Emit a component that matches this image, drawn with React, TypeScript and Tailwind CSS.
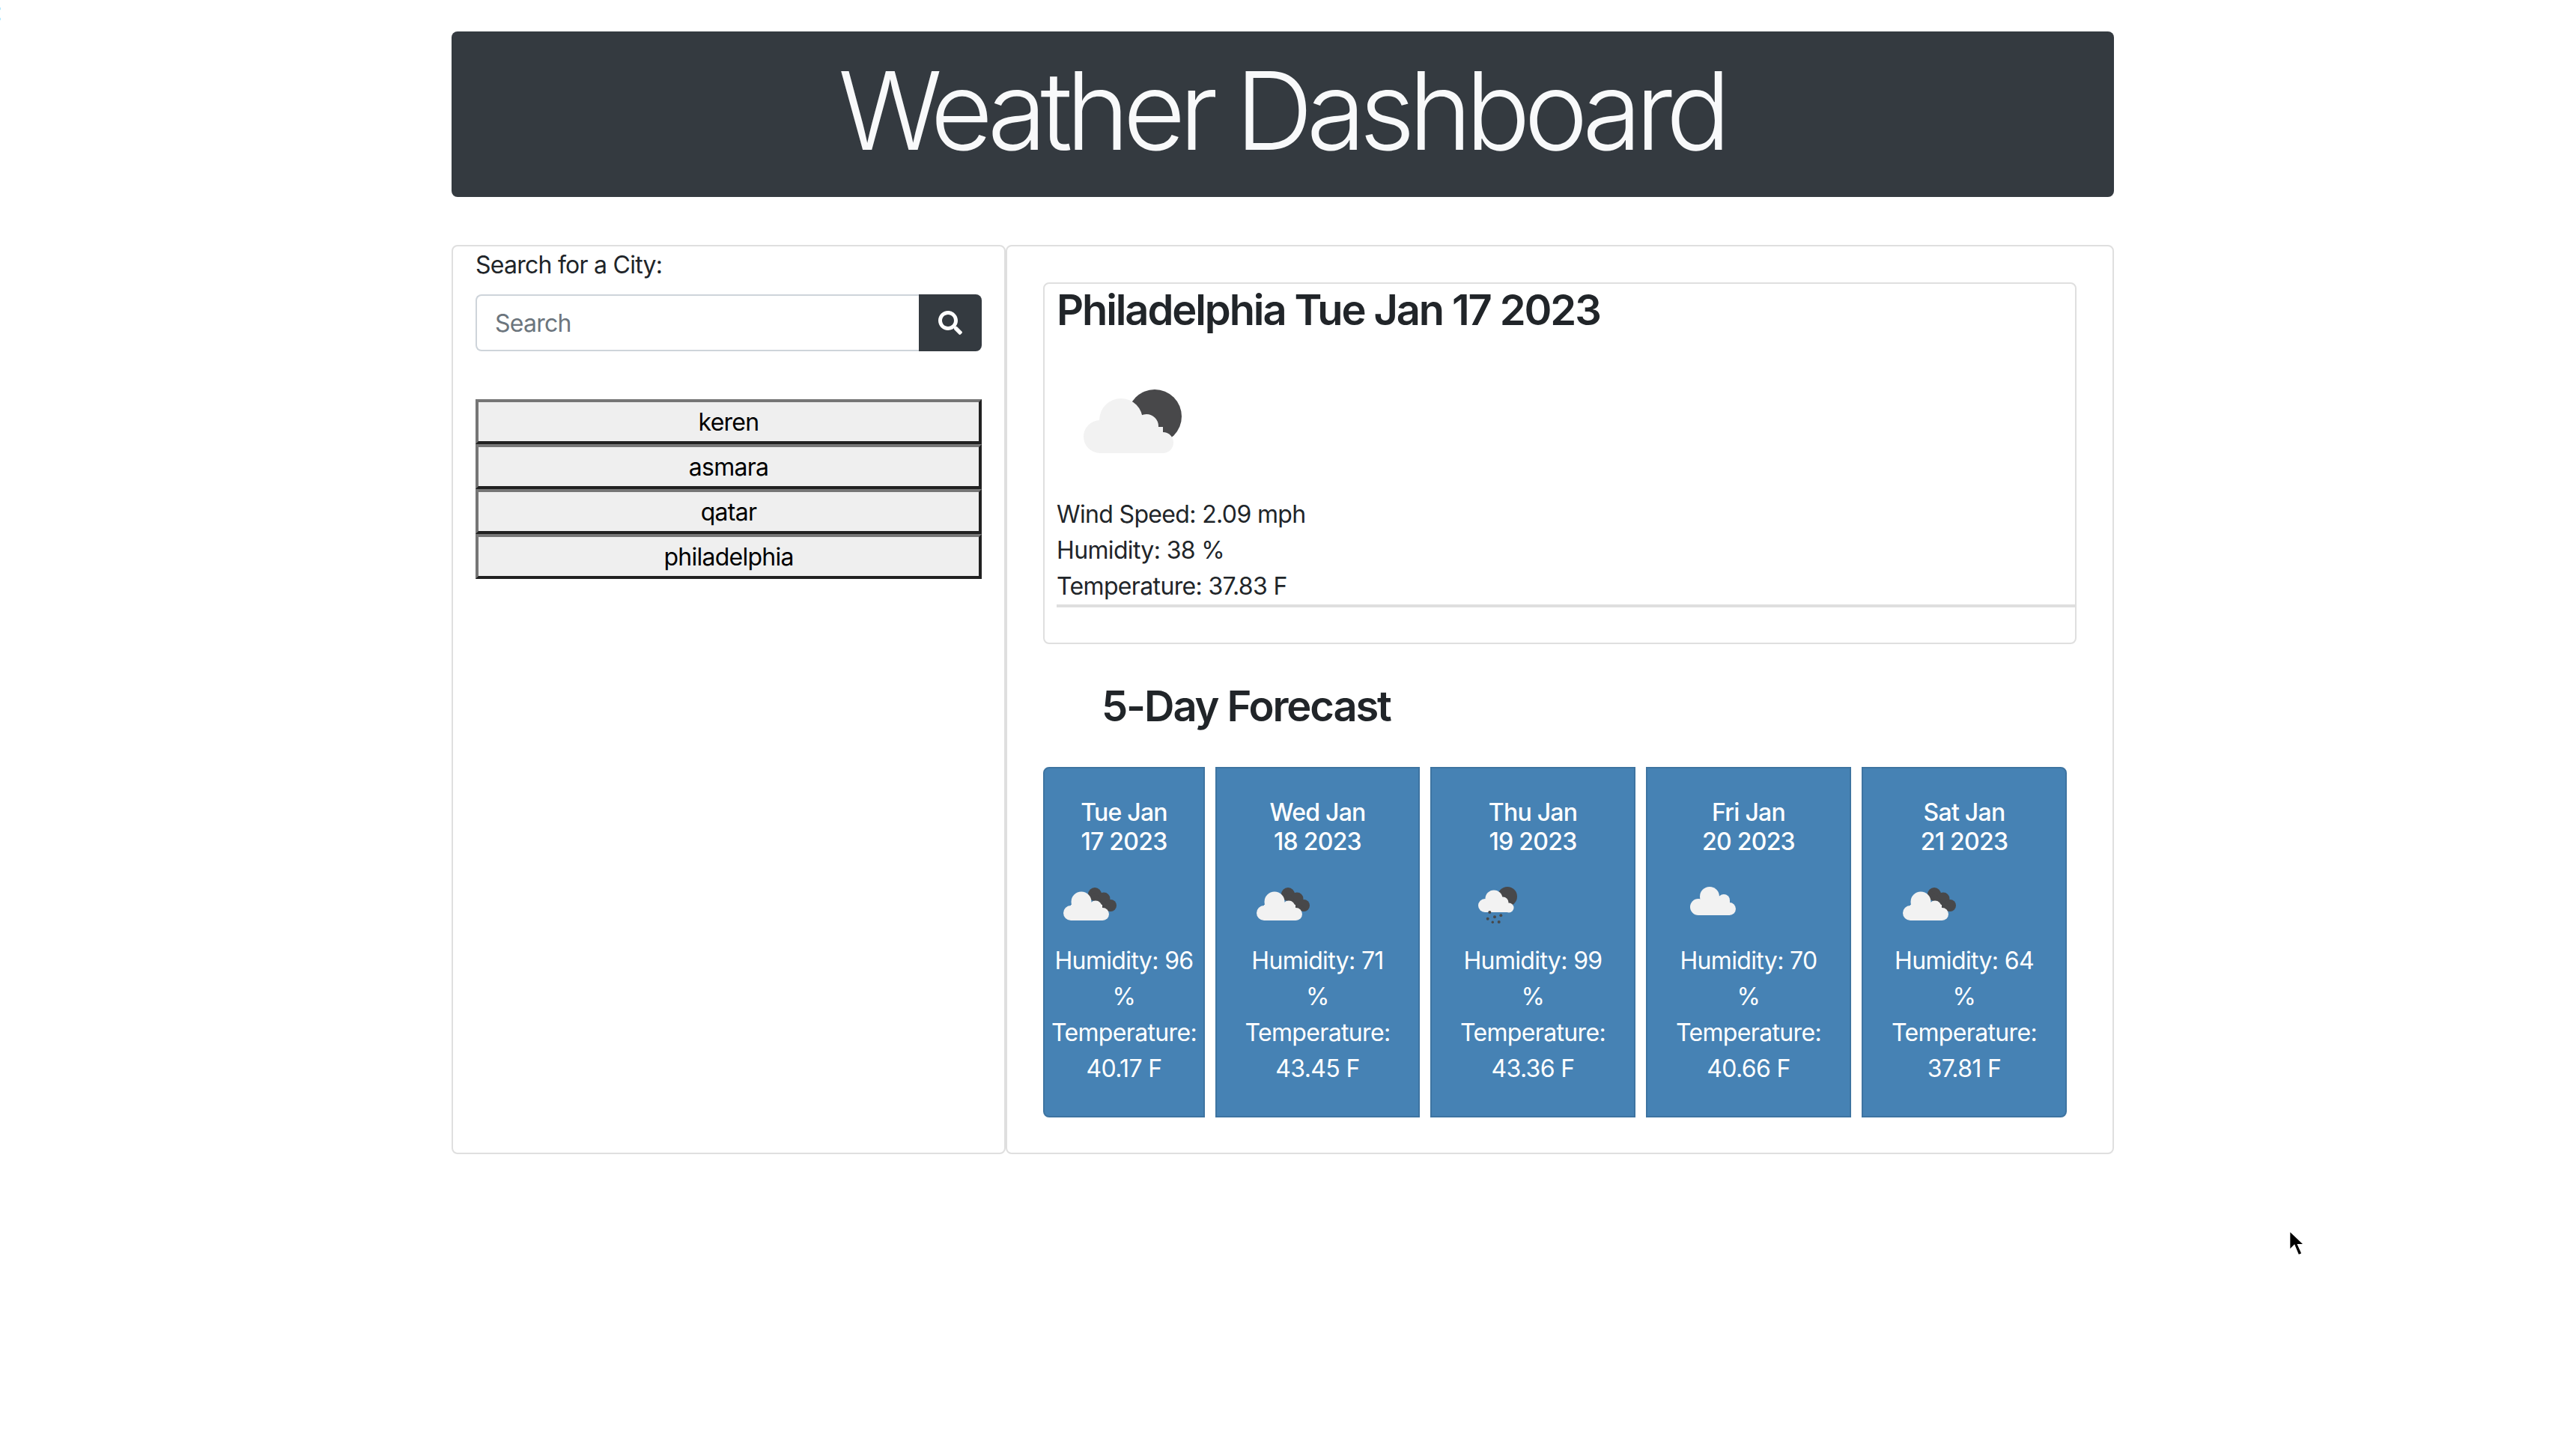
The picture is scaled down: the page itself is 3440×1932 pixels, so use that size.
const font = "font-['Inter','Liberation_Sans',sans-serif]";

function MainIcon() {
  return (
    <svg viewBox="0 0 132 86" className="w-[132px] h-[86px] block">
      <circle cx="95" cy="36" r="36" fill="#48484a" />
      <g fill="#f2f2f2">
        <circle cx="50" cy="41" r="29" />
        <circle cx="22" cy="63" r="22" />
        <circle cx="84" cy="49" r="16" />
        <circle cx="106" cy="71" r="14" />
        <rect x="22" y="50" width="84" height="35" />
      </g>
    </svg>
  );
}

function CloudIcon({ kind }: { kind: "broken" | "rain" | "plain" }) {
  if (kind === "rain") {
    return (
      <svg viewBox="0 0 54 52" className="w-[54px] h-[52px] block">
        <circle cx="39" cy="13" r="13" fill="#48484a" />
        <g fill="#f2f2f2">
          <circle cx="21" cy="16" r="11.5" />
          <circle cx="9" cy="25" r="9" />
          <circle cx="33" cy="21" r="7.5" />
          <circle cx="41" cy="28" r="6.5" />
          <rect x="9" y="22" width="32" height="12" />
        </g>
        <g fill="#48484a">
          <circle cx="15.3" cy="34" r="2" />
          <circle cx="22" cy="40.3" r="2" />
          <circle cx="12.7" cy="42.7" r="2" />
          <circle cx="30.3" cy="38.3" r="2" />
          <circle cx="19.3" cy="47.3" r="1.7" />
          <circle cx="27.7" cy="47" r="2" />
        </g>
      </svg>
    );
  }
  if (kind === "plain") {
    return (
      <svg viewBox="0 0 62 39" className="w-[62px] h-[39px] block mt-[6px]">
        <g fill="#f2f2f2">
          <circle cx="26" cy="13" r="13" />
          <circle cx="11" cy="27" r="11" />
          <circle cx="45" cy="18" r="8" />
          <circle cx="52.5" cy="29.5" r="8.5" />
          <rect x="11" y="18" width="42" height="20" />
        </g>
      </svg>
    );
  }
  return (
    <svg viewBox="0 0 72 46" className="w-[72px] h-[46px] block mt-[1px]">
      <g fill="#48484a">
        <circle cx="42" cy="10" r="9" />
        <circle cx="54" cy="16" r="8.5" />
        <circle cx="63" cy="25" r="8" />
        <path d="M36 4 L66 30 L50 36 Z" />
      </g>
      <g fill="#f2f2f2">
        <circle cx="24" cy="20" r="13.5" />
        <circle cx="10" cy="35" r="10" />
        <circle cx="43" cy="27" r="8.5" />
        <circle cx="52.5" cy="36.5" r="8.5" />
        <rect x="10" y="24" width="42" height="21" />
      </g>
    </svg>
  );
}

const forecast = [
  { w: "w-[216px]", a: "Tue Jan", b: "17 2023", h: "96", t: "40.17 F", kind: "broken" as const, r: "rounded-l-[8px]", ml: "ml-[25px]" },
  { w: "w-[273px]", a: "Wed Jan", b: "18 2023", h: "71", t: "43.45 F", kind: "broken" as const, r: "", ml: "ml-[53px]" },
  { w: "w-[274px]", a: "Thu Jan", b: "19 2023", h: "99", t: "43.36 F", kind: "rain" as const, r: "", ml: "ml-[62px]" },
  { w: "w-[274px]", a: "Fri Jan", b: "20 2023", h: "70", t: "40.66 F", kind: "plain" as const, r: "", ml: "ml-[57px]" },
  { w: "w-[274px]", a: "Sat Jan", b: "21 2023", h: "64", t: "37.81 F", kind: "broken" as const, r: "rounded-r-[8px]", ml: "ml-[53px]" },
];

export default function App() {
  return (
    <div className={`relative min-h-[1932px] bg-white ${font} text-[32px] leading-[48px] tracking-[-0.65px] text-[#212529]`}>
      <span className="absolute left-[-6px] top-[-8px] text-[32px] leading-[48px] text-black" style={{ fontFamily: "Liberation Sans" }}>:</span>
      <div className="w-[2220px] ml-[603px] pt-[42px]">
        <header className="h-[221px] rounded-[8px] bg-[#343a40] flex items-center justify-center">
          <h1 className="text-[144px] leading-[172px] font-light text-[#f8f9fa] tracking-[-8.6px] mt-[-10px] mr-[4px]">Weather Dashboard</h1>
        </header>
        <div className="flex mt-[64px] h-[1214px]">
          <aside className="w-[740px] rounded-[8px] border-2 border-[#dfdfdf] px-[30px]">
            <label className="block leading-[48px] mt-[1px] tracking-[-0.75px]">Search for a City:</label>
            <div className="flex h-[76px] mt-[15px]">
              <input
                placeholder="Search"
                className="flex-1 min-w-0 h-full border-2 border-r-0 border-[#ced4da] rounded-l-[8px] px-[24px] text-[32px] tracking-[-0.75px] text-[#495057] placeholder:text-[#6c757d] outline-none"
              />
              <button className="w-[84px] h-full bg-[#343a40] rounded-r-[8px] flex items-center justify-center">
                <svg viewBox="0 0 512 512" className="w-[32px] h-[32px]" fill="#fff">
                  <path d="M505 442.7L405.3 343c-4.5-4.5-10.6-7-17-7H372c27.6-35.3 44-79.7 44-128C416 93.1 322.9 0 208 0S0 93.1 0 208s93.1 208 208 208c48.3 0 92.7-16.4 128-44v16.3c0 6.4 2.5 12.5 7 17l99.7 99.7c9.4 9.4 24.6 9.4 33.9 0l28.3-28.3c9.4-9.4 9.4-24.6.1-34zM208 336c-70.7 0-128-57.2-128-128 0-70.7 57.2-128 128-128 70.7 0 128 57.2 128 128 0 70.7-57.2 128-128 128z" />
                </svg>
              </button>
            </div>
            <div className="mt-[64px] flex flex-col">
              {["keren", "asmara", "qatar", "philadelphia"].map((c) => (
                <button key={c} className="h-[60px] w-full bg-[#efefef] border-4 border-t-[#767676] border-l-[#767676] border-b-[#212121] border-r-[#212121] text-black text-[32px] leading-[48px] tracking-[-0.75px] pt-[2px] flex items-center justify-center">
                  {c}
                </button>
              ))}
            </div>
          </aside>
          <main className="flex-1 rounded-[8px] border-2 border-[#dfdfdf] pt-[48px] px-[48px]">
            <section className="h-[483px] rounded-[8px] border-2 border-[#dfdfdf] px-[16px]">
              <h3 className="text-[56px] leading-[67px] font-semibold tracking-[-2.1px] mt-[2px]">Philadelphia Tue Jan 17 2023</h3>
              <div className="mt-[72px] ml-[36px]"><MainIcon /></div>
              <div className="mt-[57px]">
                <p>Wind Speed: 2.09 mph</p>
                <p>Humidity: 38 %</p>
                <p>Temperature: 37.83 F</p>
              </div>
              <div className="h-[4px] bg-[#dfdfdf] -mr-[16px]" />
            </section>
            <h3 className="text-[56px] leading-[67px] font-semibold tracking-[-2.1px] ml-[78px] mt-[50px]">5-Day Forecast</h3>
            <div className="flex gap-[14px] mt-[47px]">
              {forecast.map((f) => (
                <div key={f.a} className={`${f.w} ${f.r} h-[468px] bg-[#4682b4] border-2 border-[#3e74a1] text-white text-center pt-[39px] shrink-0`}>
                  <div className="text-[32px] leading-[39px] font-medium tracking-[-0.75px]">{f.a}<br />{f.b}</div>
                  <div className={`${f.ml} mt-[41px] h-[60px]`}><CloudIcon kind={f.kind} /></div>
                  <div className="mt-[15px] whitespace-nowrap">
                    <p>Humidity: {f.h}</p>
                    <p>%</p>
                    <p>Temperature:</p>
                    <p>{f.t}</p>
                  </div>
                </div>
              ))}
            </div>
          </main>
        </div>
      </div>
      <svg viewBox="0 0 24 36" className="absolute left-[3054px] top-[1640px] w-[26px] h-[40px]">
        <path d="M3 2 L3 27 L9 21 L14 33 L19 31 L14 20 L22 20 Z" fill="#000" stroke="#fff" strokeWidth="2" />
      </svg>
    </div>
  );
}
